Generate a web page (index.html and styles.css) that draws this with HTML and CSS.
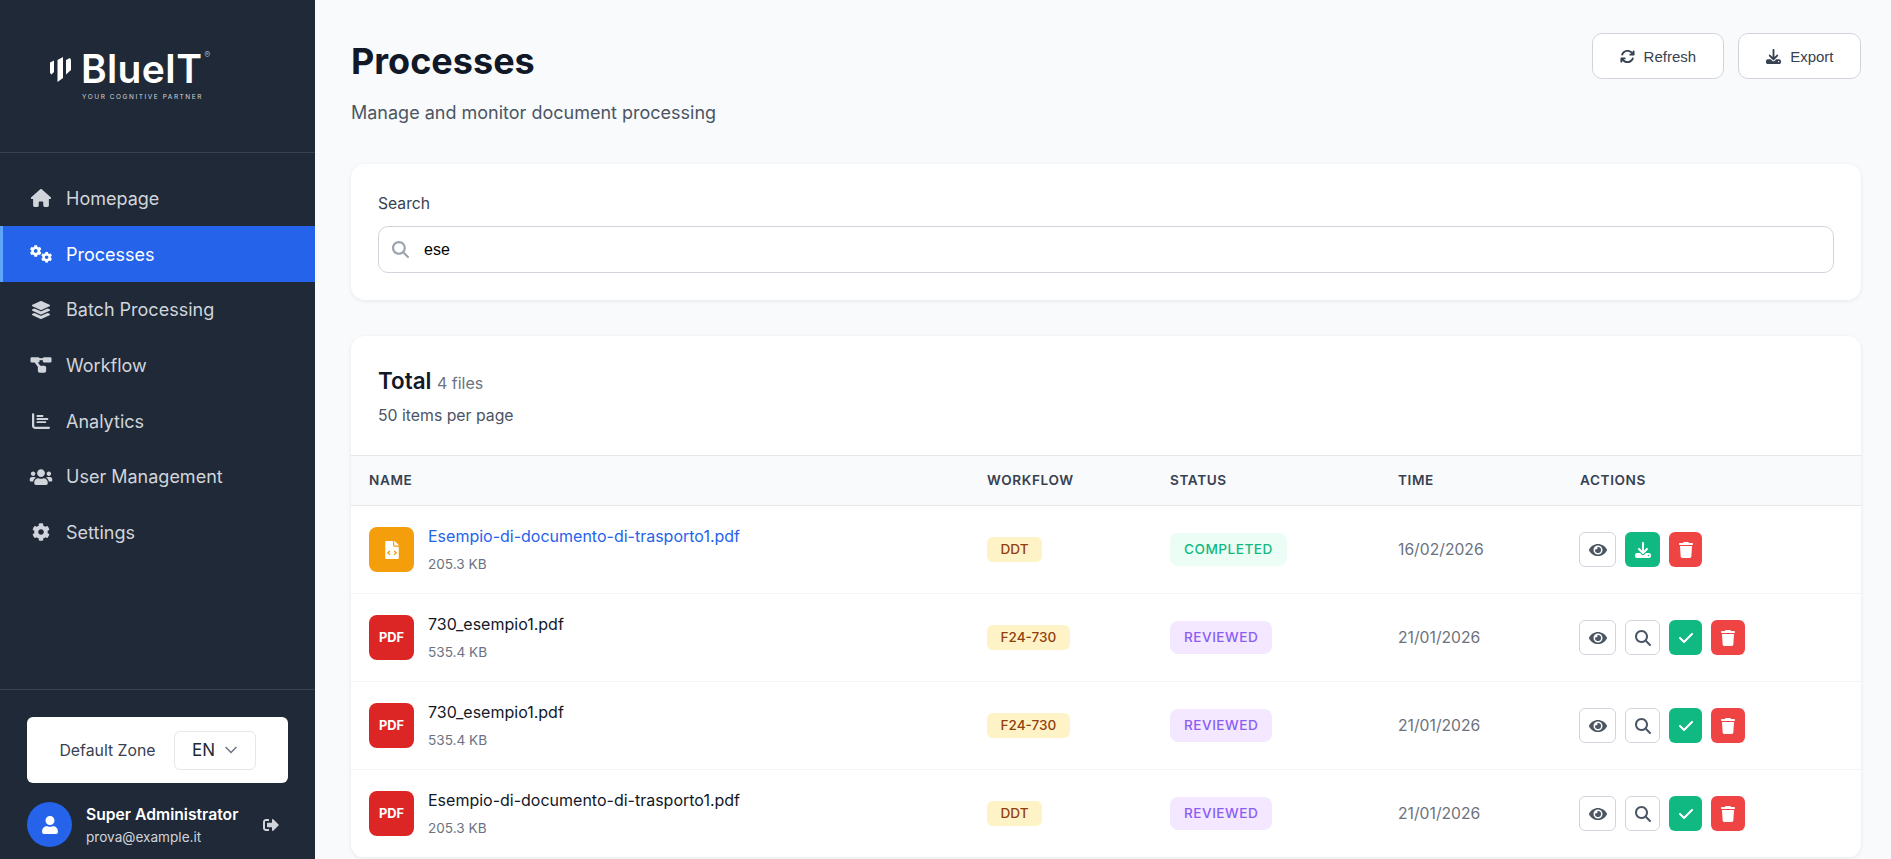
FILE: index.html
```html
<!DOCTYPE html>
<html lang="en">
<head>
<meta charset="utf-8">
<title>Processes</title>
<link rel="stylesheet" href="styles.css">
</head>
<body>
<svg class="defs" aria-hidden="true">
  <defs>
    <symbol id="i-home" viewBox="0 0 576 512"><path d="M575.800 255.500c0 18-15 32.100-32 32.100h-32l.7 160.200c0 2.700-.2 5.400-.5 8.100V472c0 22.100-17.900 40-40 40H456c-1.100 0-2.200 0-3.300-.1c-1.400 .1-2.800 .1-4.200 .1H416 392c-22.100 0-40-17.900-40-40V448 384c0-17.700-14.300-32-32-32H256c-17.700 0-32 14.300-32 32v64 24c0 22.100-17.900 40-40 40H160 128.100c-1.500 0-3-.1-4.500-.2c-1.200 .1-2.400 .2-3.600 .2H104c-22.100 0-40-17.900-40-40V360c0-.9 0-1.900 .1-2.800V287.600H32c-18 0-32-14-32-32.100c0-9 3-17 10-24L266.400 8c7-7 15-8 22-8s15 2 21 7L564.800 231.500c8 7 12 15 11 24z"/></symbol>
    <symbol id="i-cog" viewBox="0 0 512 512"><path d="M487.400 315.700l-42.600-24.600c4.300-23.200 4.300-47 0-70.200l42.600-24.600c4.900-2.800 7.100-8.600 5.500-14-11.100-35.600-30-67.800-54.700-94.600-3.800-4.100-10-5.100-14.800-2.300L380.800 110c-17.900-15.400-38.500-27.300-60.800-35.100V25.800c0-5.600-3.900-10.500-9.400-11.700-36.700-8.200-74.300-7.800-109.200 0-5.500 1.200-9.400 6.100-9.400 11.700V75c-22.200 7.900-42.800 19.800-60.800 35.100L88.700 85.500c-4.900-2.800-11-1.900-14.800 2.300-24.700 26.700-43.600 58.900-54.700 94.600-1.700 5.400.6 11.200 5.500 14L67.300 221c-4.300 23.200-4.300 47 0 70.200l-42.600 24.600c-4.900 2.800-7.100 8.600-5.500 14 11.100 35.600 30 67.800 54.700 94.600 3.800 4.100 10 5.100 14.800 2.300l42.600-24.600c17.900 15.400 38.500 27.300 60.800 35.100v49.200c0 5.600 3.900 10.500 9.400 11.700 36.700 8.200 74.300 7.800 109.200 0 5.500-1.200 9.400-6.100 9.400-11.700v-49.200c22.200-7.900 42.800-19.800 60.800-35.100l42.600 24.600c4.900 2.800 11 1.900 14.800-2.300 24.700-26.700 43.600-58.900 54.700-94.600 1.500-5.500-.7-11.300-5.600-14.100zM256 336c-44.100 0-80-35.900-80-80s35.900-80 80-80 80 35.900 80 80-35.900 80-80 80z"/></symbol>
    <symbol id="i-cogs" viewBox="0 0 640 512"><use href="#i-cog" x="0" y="0" width="340" height="340"/><use href="#i-cog" x="320" y="190" width="320" height="320"/></symbol>
    <symbol id="i-layers" viewBox="0 0 512 512"><path d="M12.410 148.020l232.940 105.670c6.800 3.090 14.490 3.090 21.290 0l232.940-105.670c16.550-7.510 16.550-32.520 0-40.030L266.650 2.310a25.607 25.607 0 0 0-21.290 0L12.410 107.980c-16.550 7.510-16.550 32.530 0 40.040zm487.180 88.280l-58.090-26.330-161.640 73.270c-7.560 3.430-15.590 5.170-23.860 5.170s-16.290-1.740-23.860-5.170L70.510 209.970l-58.100 26.330c-16.550 7.500-16.550 32.500 0 40l232.940 105.590c6.800 3.080 14.490 3.080 21.290 0L499.590 276.300c16.550-7.500 16.550-32.500 0-40zm0 127.800l-57.870-26.230-161.860 73.370c-7.560 3.430-15.590 5.170-23.860 5.170s-16.290-1.740-23.860-5.170L70.290 337.870 12.410 364.100c-16.550 7.500-16.550 32.500 0 40l232.940 105.590c6.800 3.080 14.490 3.080 21.290 0L499.590 404.100c16.550-7.500 16.550-32.500 0-40z"/></symbol>
    <symbol id="i-diagram" viewBox="-4.500 -3.500 72 54"><rect width="27" height="16" rx="4"/><rect x="37" width="26" height="16" rx="4"/><rect x="22" y="26" width="25" height="21" rx="6"/><path d="M20 3H45V9H20Z"/><path d="M10 12L17 9L34 32L27 36Z"/></symbol>
    <symbol id="i-chart" viewBox="0 0 512 512"><path d="M32 32c17.700 0 32 14.300 32 32V400c0 8.800 7.200 16 16 16H480c17.700 0 32 14.300 32 32s-14.300 32-32 32H80c-44.200 0-80-35.800-80-80V64C0 46.300 14.300 32 32 32zM128 112c0-15.500 12.500-28 28-28H296c15.500 0 28 12.500 28 28s-12.500 28-28 28H156c-15.500 0-28-12.500-28-28zm0 88c0-15.500 12.500-28 28-28H436c15.500 0 28 12.500 28 28s-12.500 28-28 28H156c-15.500 0-28-12.500-28-28zm0 88c0-15.500 12.500-28 28-28H376c15.500 0 28 12.500 28 28s-12.500 28-28 28H156c-15.500 0-28-12.500-28-28z"/></symbol>
    <symbol id="i-users" viewBox="0 0 640 512"><path d="M96 224c35.300 0 64-28.700 64-64s-28.700-64-64-64-64 28.700-64 64 28.700 64 64 64zm448 0c35.300 0 64-28.700 64-64s-28.700-64-64-64-64 28.700-64 64 28.700 64 64 64zm32 32h-64c-17.600 0-33.500 7.100-45.100 18.600 40.300 22.100 68.900 62 75.100 109.400h66c17.700 0 32-14.300 32-32v-32c0-35.300-28.700-64-64-64zm-256 0c61.900 0 112-50.100 112-112S381.900 32 320 32 208 82.100 208 144s50.100 112 112 112zm76.800 32h-8.300c-20.800 10-43.900 16-68.500 16s-47.600-6-68.500-16h-8.300C179.600 288 128 339.600 128 403.200V432c0 26.500 21.500 48 48 48h288c26.500 0 48-21.500 48-48v-28.800c0-63.600-51.600-115.200-115.200-115.200zm-223.700-13.400C161.500 263.100 145.600 256 128 256H64c-35.300 0-64 28.700-64 64v32c0 17.700 14.300 32 32 32h65.900c6.300-47.400 34.900-87.300 75.200-109.400z"/></symbol>
    <symbol id="i-user" viewBox="0 0 448 512"><path d="M224 256c70.700 0 128-57.300 128-128S294.700 0 224 0 96 57.300 96 128s57.300 128 128 128zm89.600 32h-16.700c-22.200 10.200-46.900 16-72.900 16s-50.600-5.800-72.900-16h-16.700C60.200 288 0 348.200 0 422.400V464c0 26.500 21.500 48 48 48h352c26.500 0 48-21.500 48-48v-41.600c0-74.200-60.200-134.400-134.400-134.400z"/></symbol>
    <symbol id="i-signout" viewBox="0 0 512 512"><path d="M497 273L329 441c-15 15-41 4.500-41-17v-96H152c-13.300 0-24-10.700-24-24v-96c0-13.300 10.700-24 24-24h136V88c0-21.400 25.900-32 41-17l168 168c9.300 9.400 9.300 24.600 0 34zM192 436v-40c0-6.600-5.400-12-12-12H96c-17.700 0-32-14.300-32-32V160c0-17.700 14.300-32 32-32h84c6.600 0 12-5.400 12-12V76c0-6.600-5.400-12-12-12H96c-53 0-96 43-96 96v192c0 53 43 96 96 96h84c6.600 0 12-5.400 12-12z"/></symbol>
    <symbol id="i-sync" viewBox="0 0 512 512"><path d="M105.100 202.600c7.700-21.800 20.200-42.300 37.800-59.800c62.500-62.500 163.800-62.500 226.300 0L386.300 160H352c-17.700 0-32 14.300-32 32s14.300 32 32 32H463.500c0 0 0 0 0 0h.4c17.700 0 32-14.300 32-32V80c0-17.700-14.300-32-32-32s-32 14.300-32 32v35.200L414.400 97.600c-87.500-87.500-229.300-87.500-316.800 0C73.200 122 55.600 150.700 44.800 181.400c-5.900 16.700 2.900 34.900 19.500 40.800s34.900-2.900 40.800-19.500zM39 289.300c-5 1.500-9.800 4.200-13.700 8.200c-4 4-6.700 8.800-8.100 14c-.3 1.200-.6 2.500-.8 3.800c-.3 1.700-.4 3.400-.4 5.100V432c0 17.700 14.300 32 32 32s32-14.300 32-32V396.900l17.600 17.500 0 0c87.500 87.400 229.300 87.400 316.700 0c24.400-24.400 42.100-53.100 52.900-83.700c5.900-16.700-2.900-34.900-19.500-40.800s-34.900 2.900-40.800 19.500c-7.700 21.800-20.200 42.300-37.800 59.800c-62.500 62.500-163.800 62.500-226.300 0l-.1-.1L125.600 352H160c17.700 0 32-14.300 32-32s-14.300-32-32-32H48.400c-1.600 0-3.200 .1-4.800 .3s-3.100 .5-4.600 1z"/></symbol>
    <symbol id="i-download" viewBox="0 0 512 512"><path d="M288 32c0-17.700-14.300-32-32-32s-32 14.300-32 32V274.700l-73.400-73.400c-12.500-12.500-32.800-12.500-45.300 0s-12.500 32.800 0 45.300l128 128c12.500 12.500 32.800 12.500 45.300 0l128-128c12.500-12.500 12.500-32.800 0-45.300s-32.800-12.500-45.300 0L288 274.700V32zM64 352c-35.300 0-64 28.700-64 64v32c0 35.300 28.700 64 64 64H448c35.300 0 64-28.700 64-64V416c0-35.300-28.700-64-64-64H346.500l-45.300 45.300c-25 25-65.500 25-90.500 0L165.500 352H64zm368 56a24 24 0 1 1 0 48 24 24 0 1 1 0-48z"/></symbol>
    <symbol id="i-eye" viewBox="0 0 576 512"><path d="M572.520 241.400C518.290 135.590 410.930 64 288 64S57.680 135.640 3.480 241.410a32.350 32.350 0 0 0 0 29.190C57.710 376.410 165.070 448 288 448s230.320-71.640 284.520-177.410a32.350 32.350 0 0 0 0-29.190zM288 400a144 144 0 1 1 144-144 143.930 143.930 0 0 1-144 144zm0-240a95.310 95.310 0 0 0-25.310 3.790 47.850 47.850 0 0 1-66.900 66.900A95.780 95.780 0 1 0 288 160z"/></symbol>
    <symbol id="i-search" viewBox="0 0 512 512"><path d="M416 208c0 45.900-14.900 88.300-40 122.700L502.600 457.400c12.500 12.500 12.500 32.800 0 45.300s-32.800 12.500-45.300 0L330.700 376c-34.400 25.200-76.800 40-122.700 40C93.100 416 0 322.900 0 208S93.100 0 208 0S416 93.100 416 208zM208 352a144 144 0 1 0 0-288 144 144 0 1 0 0 288z"/></symbol>
    <symbol id="i-check" viewBox="0 0 448 512"><path d="M438.600 105.400c12.500 12.500 12.500 32.800 0 45.300l-256 256c-12.500 12.500-32.800 12.500-45.300 0l-128-128c-12.500-12.500-12.500-32.800 0-45.300s32.800-12.500 45.300 0L160 338.700 393.400 105.400c12.500-12.500 32.800-12.500 45.300 0z"/></symbol>
    <symbol id="i-trash" viewBox="0 0 448 512"><path d="M135.200 17.700L128 32H32C14.300 32 0 46.300 0 64S14.300 96 32 96H416c17.700 0 32-14.300 32-32s-14.300-32-32-32H320l-7.200-14.300C307.400 6.800 296.300 0 284.200 0H163.800c-12.100 0-23.200 6.800-28.600 17.700zM416 128H32L53.200 467c1.600 25.300 22.600 45 47.900 45H346.900c25.300 0 46.300-19.700 47.900-45L416 128z"/></symbol>
    <symbol id="i-file" viewBox="0 0 384 512"><path d="M384 121.941V128H256V0h6.059c6.365 0 12.470 2.529 16.971 7.029l97.941 97.941A24.005 24.005 0 0 1 384 121.941zM248 160c-13.200 0-24-10.800-24-24V0H24C10.745 0 0 10.745 0 24v464c0 13.255 10.745 24 24 24h336c13.255 0 24-10.745 24-24V160H248zM123.206 400.505a5.400 5.400 0 0 1-7.633.246l-64.866-60.812a5.400 5.400 0 0 1 0-7.879l64.866-60.812a5.400 5.400 0 0 1 7.633.246l19.579 20.885a5.400 5.400 0 0 1-.372 7.747L101.650 336l40.763 35.874a5.400 5.400 0 0 1 .372 7.747l-19.579 20.884zm211.087-60.566l-64.866 60.812a5.400 5.400 0 0 1-7.633-.246l-19.580-20.885a5.400 5.400 0 0 1 .373-7.747L284.350 336l-40.763-35.874a5.400 5.400 0 0 1-.373-7.747l19.580-20.885a5.400 5.400 0 0 1 7.633-.246l64.866 60.812a5.400 5.400 0 0 1 0 7.879z"/></symbol>
  </defs>
</svg>
<div class="app">
  <aside class="sidebar">
    <div class="brand">
      <div class="logo">
        <div class="logo-top">
          <svg class="logo-mark" viewBox="0 0 21 25"><path d="M0 5.500L4 3.500V15L1.500 17.500L0 16Z"/><path d="M7.500 3L13 0V21L7.500 25Z"/><path d="M16 3L20 1L21 3V13L16 17.500Z"/></svg>
          <span class="logo-text">BlueIT</span>
          <span class="logo-reg">®</span>
        </div>
        <div class="logo-tag">YOUR COGNITIVE PARTNER</div>
      </div>
    </div>
    <nav class="nav">
      <a class="nav-item"><svg class="nav-icon"><use href="#i-home"/></svg><span>Homepage</span></a>
      <a class="nav-item active"><svg class="nav-icon"><use href="#i-cogs"/></svg><span>Processes</span></a>
      <a class="nav-item"><svg class="nav-icon"><use href="#i-layers"/></svg><span>Batch Processing</span></a>
      <a class="nav-item"><svg class="nav-icon"><use href="#i-diagram"/></svg><span>Workflow</span></a>
      <a class="nav-item"><svg class="nav-icon"><use href="#i-chart"/></svg><span>Analytics</span></a>
      <a class="nav-item"><svg class="nav-icon"><use href="#i-users"/></svg><span>User Management</span></a>
      <a class="nav-item"><svg class="nav-icon"><use href="#i-cog"/></svg><span>Settings</span></a>
    </nav>
    <div class="side-foot">
      <div class="zone">
        <span class="zone-label">Default Zone</span>
        <div class="lang"><span>EN</span>
          <svg class="chev" viewBox="0 0 12 8"><path d="M0.500 1L6 6.500L11.500 1"/></svg>
        </div>
      </div>
      <div class="user">
        <div class="avatar"><svg class="avatar-icon"><use href="#i-user"/></svg></div>
        <div class="user-info">
          <div class="user-name">Super Administrator</div>
          <div class="user-mail">prova@example.it</div>
        </div>
        <svg class="logout"><use href="#i-signout"/></svg>
      </div>
    </div>
  </aside>
  <main class="main">
    <header class="head">
      <div>
        <h1 class="title">Processes</h1>
        <p class="subtitle">Manage and monitor document processing</p>
      </div>
      <div class="head-actions">
        <button class="hbtn"><svg class="hbtn-icon"><use href="#i-sync"/></svg>Refresh</button>
        <button class="hbtn"><svg class="hbtn-icon"><use href="#i-download"/></svg>Export</button>
      </div>
    </header>
    <section class="card search-card">
      <label class="search-label" for="q">Search</label>
      <div class="search-box">
        <svg class="search-icon"><use href="#i-search"/></svg>
        <input id="q" class="search-input" type="text" value="ese">
      </div>
    </section>
    <section class="card table-card">
      <div class="table-head">
        <div class="total"><span class="total-t">Total</span> <span class="total-n">4 files</span></div>
        <div class="perpage">50 items per page</div>
      </div>
      <table class="table">
        <colgroup><col class="c1"><col class="c2"><col class="c3"><col class="c4"><col class="c5"></colgroup>
        <thead>
          <tr><th>NAME</th><th>WORKFLOW</th><th>STATUS</th><th>TIME</th><th>ACTIONS</th></tr>
        </thead>
        <tbody>
          <tr>
            <td><div class="file"><div class="ficon orange"><svg class="ficon-svg"><use href="#i-file"/></svg></div><div><div class="fname link">Esempio-di-documento-di-trasporto1.pdf</div><div class="fsize">205.3 KB</div></div></div></td>
            <td><span class="tag">DDT</span></td>
            <td><span class="status done">COMPLETED</span></td>
            <td class="time">16/02/2026</td>
            <td class="actions"><div class="acts">
              <button class="act ghost w37"><svg class="ai-eye"><use href="#i-eye"/></svg></button>
              <button class="act green w35"><svg class="ai"><use href="#i-download"/></svg></button>
              <button class="act red w33"><svg class="ai-trash"><use href="#i-trash"/></svg></button>
            </div></td>
          </tr>
          <tr>
            <td><div class="file"><div class="ficon redbg">PDF</div><div><div class="fname">730_esempio1.pdf</div><div class="fsize">535.4 KB</div></div></div></td>
            <td><span class="tag">F24-730</span></td>
            <td><span class="status rev">REVIEWED</span></td>
            <td class="time">21/01/2026</td>
            <td class="actions"><div class="acts">
              <button class="act ghost w37"><svg class="ai-eye"><use href="#i-eye"/></svg></button>
              <button class="act ghost w35"><svg class="ai"><use href="#i-search"/></svg></button>
              <button class="act green w33"><svg class="ai-trash"><use href="#i-check"/></svg></button>
              <button class="act red w34"><svg class="ai-trash"><use href="#i-trash"/></svg></button>
            </div></td>
          </tr>
          <tr>
            <td><div class="file"><div class="ficon redbg">PDF</div><div><div class="fname">730_esempio1.pdf</div><div class="fsize">535.4 KB</div></div></div></td>
            <td><span class="tag">F24-730</span></td>
            <td><span class="status rev">REVIEWED</span></td>
            <td class="time">21/01/2026</td>
            <td class="actions"><div class="acts">
              <button class="act ghost w37"><svg class="ai-eye"><use href="#i-eye"/></svg></button>
              <button class="act ghost w35"><svg class="ai"><use href="#i-search"/></svg></button>
              <button class="act green w33"><svg class="ai-trash"><use href="#i-check"/></svg></button>
              <button class="act red w34"><svg class="ai-trash"><use href="#i-trash"/></svg></button>
            </div></td>
          </tr>
          <tr>
            <td><div class="file"><div class="ficon redbg">PDF</div><div><div class="fname">Esempio-di-documento-di-trasporto1.pdf</div><div class="fsize">205.3 KB</div></div></div></td>
            <td><span class="tag">DDT</span></td>
            <td><span class="status rev">REVIEWED</span></td>
            <td class="time">21/01/2026</td>
            <td class="actions"><div class="acts">
              <button class="act ghost w37"><svg class="ai-eye"><use href="#i-eye"/></svg></button>
              <button class="act ghost w35"><svg class="ai"><use href="#i-search"/></svg></button>
              <button class="act green w33"><svg class="ai-trash"><use href="#i-check"/></svg></button>
              <button class="act red w34"><svg class="ai-trash"><use href="#i-trash"/></svg></button>
            </div></td>
          </tr>
        </tbody>
      </table>
    </section>
  </main>
</div>
</body>
</html>
```

FILE: styles.css
```css
* { box-sizing: border-box; }
html, body { margin: 0; height: 100%; overflow: hidden; }
body { font-family: Inter, "Liberation Sans", sans-serif; background: #f9fafb; color: #111827; }
.defs { display: none; }
svg { fill: currentColor; display: block; }

.app { display: flex; height: 859px; overflow: hidden; }

.sidebar { width: 315px; flex: none; background: #1f2937; display: flex; flex-direction: column; }
.brand { height: 153px; border-bottom: 1px solid #374151; padding: 50px 0 0 50px; }
.logo { width: 175px; }
.logo-top { display: flex; align-items: flex-start; color: #fff; height: 38px; }
.logo-mark { width: 21px; height: 25px; margin-top: 7px; }
.logo-text { font-size: 39px; font-weight: 600; line-height: 38px; margin-left: 10px; letter-spacing: 0.300px; }
.logo-reg { font-size: 9px; line-height: 10px; margin-left: 2px; color: #9ca3af; }
.logo-tag { font-size: 6.500px; line-height: 8px; letter-spacing: 1.550px; color: #d1d5db; margin: 5px 0 0 32px; white-space: nowrap; }

.nav { flex: 1; padding-top: 17.500px; }
.nav-item { display: flex; align-items: center; gap: 13px; height: 55.700px; padding-left: 26px; border-left: 3px solid transparent; color: #d1d5db; font-size: 18px; font-weight: 400; }
.nav-item.active { background: #2563eb; border-left-color: #60a5fa; color: #fff; }
.nav-icon { width: 24px; height: 18px; flex: none; }

.side-foot { height: 170px; border-top: 1px solid #374151; padding: 27px 27px 0; }
.zone { height: 66px; background: #fff; border-radius: 6px; display: flex; align-items: center; justify-content: center; gap: 18px; }
.zone-label { font-size: 15.800px; color: #374151; }
.lang { width: 82px; height: 39px; border: 1px solid #e5e7eb; border-radius: 6px; display: flex; align-items: center; padding-left: 17.500px; gap: 10px; font-size: 17px; color: #1f2937; }
.chev { width: 12px; height: 8px; fill: none; stroke: #6b7280; stroke-width: 1.500; }

.user { display: flex; align-items: center; margin-top: 19px; color: #fff; }
.avatar { width: 45px; height: 45px; border-radius: 50%; background: #2563eb; display: flex; align-items: center; justify-content: center; flex: none; }
.avatar-icon { width: 16px; height: 18px; }
.user-info { margin-left: 14px; flex: 1; }
.user-name { font-size: 15.700px; font-weight: 600; line-height: 24px; }
.user-mail { font-size: 13.600px; line-height: 20px; color: #d1d5db; }
.logout { width: 16px; height: 16px; color: #d1d5db; margin-right: 9px; flex: none; }

.main { flex: 1; min-width: 0; padding: 33px 30px 0 36px; }
.head { display: flex; justify-content: space-between; align-items: flex-start; height: 131px; }
.title { margin: 7px 0 0; font-size: 36px; font-weight: 700; line-height: 42px; color: #111827; }
.subtitle { margin: 19px 0 0; font-size: 18px; line-height: 24px; color: #4b5563; }
.head-actions { display: flex; gap: 14.500px; }
.hbtn { height: 46px; padding: 0 26.500px 0 27px; background: #fff; border: 1px solid #d1d5db; border-radius: 10px; display: flex; align-items: center; gap: 9px; font-family: "Liberation Sans", sans-serif; font-size: 15px; color: #374151; }
.hbtn-icon { width: 15px; height: 15px; }

.card { background: #fff; border-radius: 14px; box-shadow: 0 1px 4px rgba(0, 0, 0, 0.08); }
.search-card { height: 136px; padding: 28px 27px 0; }
.search-label { display: block; font-size: 15.700px; line-height: 24px; color: #374151; margin-bottom: 10px; }
.search-box { height: 47px; border: 1px solid #d1d5db; border-radius: 10px; display: flex; align-items: center; padding-left: 13px; gap: 15px; }
.search-icon { width: 17px; height: 17px; color: #9ca3af; flex: none; }
.search-input { flex: 1; border: 0; outline: 0; background: transparent; font-family: "Liberation Sans", sans-serif; font-size: 16px; color: #000; padding: 0; }

.table-card { margin-top: 36px; overflow: hidden; }
.table-head { height: 119px; padding: 29px 27px 0; }
.total { line-height: 32px; }
.total-t { font-size: 22.400px; font-weight: 600; color: #111827; margin-right: 1px; }
.total-n { font-size: 16px; color: #6b7280; }
.perpage { font-size: 15.800px; line-height: 24px; color: #4b5563; margin-top: 5px; }

.table { width: 100%; table-layout: fixed; border-collapse: collapse; }
.c1 { width: 618px; }
.c2 { width: 183px; }
.c3 { width: 228px; }
.c4 { width: 182px; }
.table th { height: 50px; padding: 0 0 2px 18px; text-align: left; background: #f9fafb; border-top: 1px solid #e5e7eb; border-bottom: 1px solid #e5e7eb; font-size: 13.600px; font-weight: 600; letter-spacing: 0.600px; color: #374151; }
.table td { height: 88px; padding: 0 0 0 18px; border-bottom: 1px solid #f3f4f6; }
.table td.actions { padding-left: 17px; }

.file { display: flex; align-items: center; gap: 14px; }
.ficon { width: 45px; height: 45px; border-radius: 8px; display: flex; align-items: center; justify-content: center; color: #fff; font-size: 12.800px; font-weight: 700; flex: none; }
.orange { background: #f59e0b; }
.redbg { background: #dc2626; }
.ficon-svg { width: 14px; height: 18px; }
.fname { font-size: 16px; line-height: 24px; font-weight: 400; color: #111827; }
.fname.link { color: #2563eb; }
.fsize { font-size: 13.600px; line-height: 20px; margin-top: 6px; padding-bottom: 1px; color: #6b7280; }

.tag { display: inline-block; height: 25px; line-height: 25px; padding: 0 13.500px; border-radius: 6px; background: #fef3c7; color: #92400e; font-size: 13.600px; font-weight: 500; }
.status { display: inline-block; height: 33px; line-height: 33px; padding: 0 14px; border-radius: 8px; font-size: 13.600px; font-weight: 500; letter-spacing: 0.500px; }
.done { background: #ecfdf5; color: #10b981; }
.rev { background: #f3e8ff; color: #8b5cf6; }
.time { font-size: 15.700px; color: #6b7280; }

.acts { display: flex; gap: 9px; }
.act { height: 35px; padding: 0; border-radius: 6px; border: 0; display: flex; align-items: center; justify-content: center; flex: none; }
.w37 { width: 37px; }
.w35 { width: 35px; }
.w34 { width: 34px; }
.w33 { width: 33px; }
.ghost { background: #fff; border: 1px solid #d1d5db; color: #4b5563; }
.green { background: #10b981; color: #fff; }
.red { background: #ef4444; color: #fff; }
.ai { width: 16px; height: 16px; }
.ai-eye { width: 18px; height: 16px; }
.ai-trash { width: 14px; height: 16px; }
```
